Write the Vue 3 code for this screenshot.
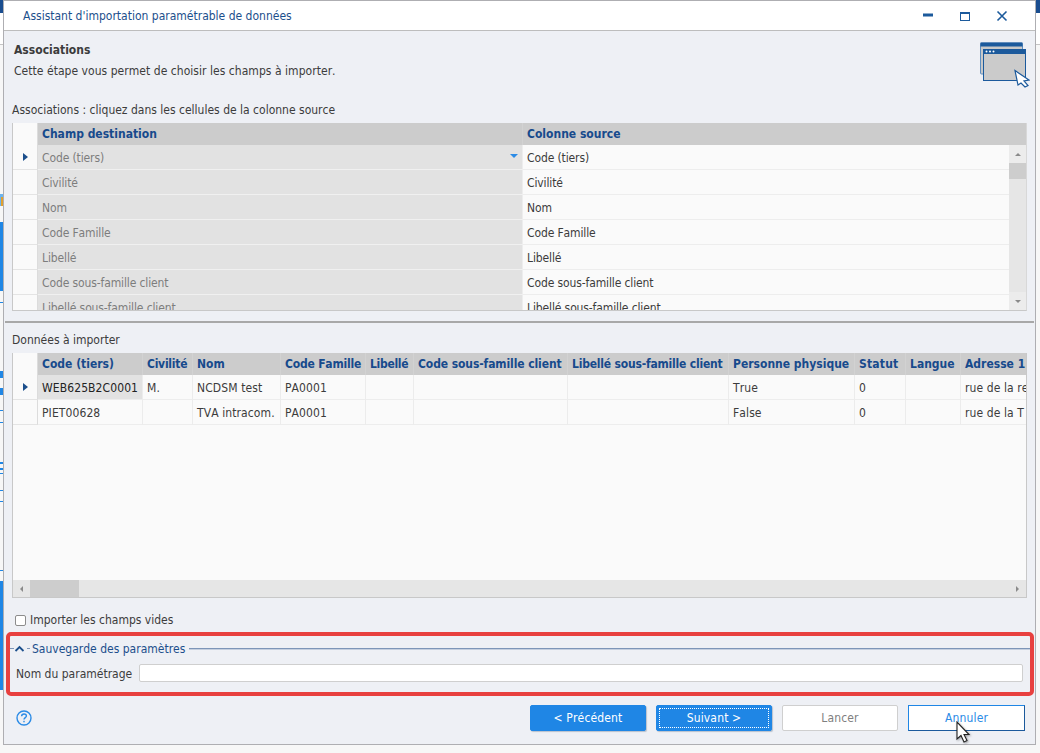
<script setup>
const mapRows = [
  "Code (tiers)",
  "Civilité",
  "Nom",
  "Code Famille",
  "Libellé",
  "Code sous-famille client",
  "Libellé sous-famille client",
];

const dataCols = [
  { label: "Code (tiers)", width: 105, spacing: 0 },
  { label: "Civilité", width: 50, spacing: -0.25 },
  { label: "Nom", width: 88, spacing: 0 },
  { label: "Code Famille", width: 85, spacing: -0.2 },
  { label: "Libellé", width: 48, spacing: -0.3 },
  { label: "Code sous-famille client", width: 154, spacing: -0.1 },
  { label: "Libellé sous-famille client", width: 161, spacing: -0.2 },
  { label: "Personne physique", width: 126, spacing: 0 },
  { label: "Statut", width: 51, spacing: 0.2 },
  { label: "Langue", width: 55, spacing: 0 },
  { label: "Adresse 1", width: 67, spacing: 0 },
];

const dataRows = [
  ["WEB625B2C0001", "M.", "NCDSM test", "PA0001", "", "", "", "True", "0", "", "rue de la re"],
  ["PIET00628", "", "TVA intracom.", "PA0001", "", "", "", "False", "0", "", "rue de la T"],
];

// bits of the application behind the dialog, visible left of it
const behind = [
  { top: 194, height: 12, left: 0, color: "#6cb4ee" },
  { top: 197, height: 9, left: 1, color: "#e0a030" },
  { top: 222, height: 69, left: 0, color: "#1f86e5" },
  { top: 302, height: 1, left: 0, color: "#1f86e5" },
  { top: 371, height: 7, left: 0, color: "#1f86e5" },
  { top: 388, height: 7, left: 0, color: "#1f86e5" },
  { top: 410, height: 1, left: 0, color: "#1f86e5" },
  { top: 422, height: 1, left: 0, color: "#1f86e5" },
  { top: 462, height: 2, left: 0, color: "#1f86e5" },
  { top: 468, height: 2, left: 0, color: "#1f86e5" },
  { top: 473, height: 1, left: 0, color: "#1f86e5" },
  { top: 490, height: 1, left: 0, color: "#1f86e5" },
  { top: 501, height: 1, left: 0, color: "#1f86e5" },
  { top: 570, height: 1, left: 0, color: "#1f86e5" },
  { top: 581, height: 109, left: 0, color: "#1f86e5" },
];
</script>

<template>
  <div class="desktop">
    <div class="behind-top"></div>
    <div class="behind-top right"></div>
    <div
      v-for="b in behind"
      :key="b.top"
      class="behind-bit"
      :style="{ top: b.top + 'px', height: b.height + 'px', left: b.left + 'px', background: b.color }"
    ></div>

    <div class="window">
      <div class="titlebar">
        <span class="title">Assistant d'importation paramétrable de données</span>
        <div class="win-btns">
          <svg width="12" height="12" viewBox="0 0 12 12"><rect x="1" y="3.500" width="10" height="3" fill="#1c5a9c" /></svg>
          <svg width="12" height="12" viewBox="0 0 12 12"><rect x="1.500" y="2.500" width="9" height="8" fill="none" stroke="#1c5a9c" /><rect x="1" y="2" width="10" height="2" fill="#1c5a9c" /></svg>
          <svg width="12" height="12" viewBox="0 0 12 12"><path d="M1.500 1.500 10.500 10.500M10.500 1.500 1.500 10.500" stroke="#1c5a9c" stroke-width="1.600" fill="none" /></svg>
        </div>
      </div>

      <div class="body">
        <div class="step-head">
          <div>
            <div class="step-title">Associations</div>
            <div class="step-sub">Cette étape vous permet de choisir les champs à importer.</div>
          </div>
          <svg class="step-icon" width="50" height="46" viewBox="0 0 50 46">
            <rect x="0.500" y="1" width="42" height="31" rx="1" fill="#c9c9c9" stroke="#5f8fc0" />
            <rect x="0.500" y="0.500" width="42" height="4" fill="#1c5a9c" />
            <rect x="3.500" y="7.500" width="42" height="31" fill="#cbcbcb" stroke="#1c5a9c" />
            <rect x="3" y="7" width="43" height="5" fill="#1c5a9c" />
            <circle cx="6.500" cy="9.500" r="1" fill="#fff" />
            <circle cx="10" cy="9.500" r="1" fill="#fff" />
            <circle cx="13.500" cy="9.500" r="1" fill="#fff" />
            <path d="M35 28.500 L49 38 L44 39 L48 43.500 L45 45 L41 41 L38 43 Z" fill="#fff" stroke="#1c5a9c" stroke-width="1.200" />
          </svg>
        </div>

        <div class="grid-label assoc-label">Associations : cliquez dans les cellules de la colonne source</div>
        <div class="map-grid">
          <div class="map-main">
            <div class="row head-row">
              <div class="ind"></div>
              <div class="cell map-col">Champ destination</div>
              <div class="cell map-col">Colonne source</div>
            </div>
            <div v-for="(name, i) in mapRows" :key="name" class="row map-row">
              <div class="ind"><span v-if="i === 0" class="arrow"></span></div>
              <div class="cell map-col dest">
                {{ name }}
                <span v-if="i === 0" class="drop"></span>
              </div>
              <div class="cell map-col src">{{ name }}</div>
            </div>
          </div>
          <div class="vscroll">
            <div class="vscroll-head"></div>
            <div class="sb-btn"><span class="tri-up"></span></div>
            <div class="sb-thumb"></div>
            <div class="sb-track"></div>
            <div class="sb-btn"><span class="tri-down"></span></div>
          </div>
        </div>

        <div class="splitter"></div>

        <div class="grid-label data-label">Données à importer</div>
        <div class="data-grid">
          <div class="data-main">
            <div class="row head-row">
              <div class="ind"></div>
              <div
                v-for="c in dataCols"
                :key="c.label"
                class="cell"
                :style="{ width: c.width + 'px', letterSpacing: c.spacing + 'px' }"
              >{{ c.label }}</div>
            </div>
            <div v-for="(r, i) in dataRows" :key="i" class="row data-row">
              <div class="ind"><span v-if="i === 0" class="arrow"></span></div>
              <div
                v-for="(v, j) in r"
                :key="j"
                class="cell"
                :class="{ current: i === 0 && j === 0 }"
                :style="{ width: dataCols[j].width + 'px' }"
              >{{ v }}</div>
            </div>
          </div>
          <div class="hscroll">
            <div class="sb-btn-h"><span class="tri-left"></span></div>
            <div class="sb-thumb-h"></div>
            <div class="sb-track-h"></div>
            <div class="sb-btn-h"><span class="tri-right"></span></div>
          </div>
        </div>

        <label class="check-line">
          <span class="check"></span>
          Importer les champs vides
        </label>

        <div class="save-box">
          <div class="save-head">
            <span class="dash"></span>
            <svg width="11" height="7" viewBox="0 0 11 7"><path d="M1.500 6 5.500 2 9.500 6" fill="none" stroke="#1c4f8c" stroke-width="1.800" /></svg>
            <span class="dash second"></span>
            <span class="save-title">Sauvegarde des paramètres</span>
            <span class="save-line"></span>
          </div>
          <div class="save-field">
            <span class="save-name">Nom du paramétrage</span>
            <div class="save-input"></div>
          </div>
        </div>

        <div class="footer">
          <svg width="16" height="16" viewBox="0 0 16 16">
            <circle cx="8" cy="8" r="7" fill="none" stroke="#2b8be6" stroke-width="1.400" />
            <path d="M5.600 6.200C5.700 4.800 6.700 4 8 4s2.400.8 2.400 2.100C10.400 7.700 8 7.700 8 9.600" fill="none" stroke="#2b8be6" stroke-width="1.400" />
            <rect x="7.300" y="10.800" width="1.400" height="1.500" fill="#2b8be6" />
          </svg>
          <div class="btns">
            <button class="btn primary">&lt; Précédent</button>
            <button class="btn primary focus"><span>Suivant &gt;</span></button>
            <button class="btn disabled">Lancer</button>
            <button class="btn hover">Annuler</button>
          </div>
        </div>
      </div>
    </div>

    <svg class="cursor" width="26" height="26" viewBox="0 0 26 26">
      <path d="M2 1V18L6 14.500 9 21 12 19.500 9 13.500H14Z" fill="#fff" stroke="#222" stroke-width="1.100" />
    </svg>
  </div>
</template>

<style>
html,
body {
  margin: 0;
  background: #f7f7f7;
}
</style>

<style scoped>
.desktop {
  position: relative;
  width: 1040px;
  height: 753px;
  overflow: hidden;
  background: #f7f7f7;
  font-family: "DejaVu Sans", sans-serif;
  font-stretch: condensed;
  font-kerning: none;
  font-size: 12px;
  color: #3c3c3c;
}

.behind-top {
  position: absolute;
  left: 0;
  top: 0;
  width: 3px;
  height: 44px;
  background: linear-gradient(#1a4d8f 13px, #fff 13px);
  border-bottom: 1px solid #c4c4c4;
}
.behind-top.right {
  left: auto;
  right: 0;
  width: 4px;
}
.behind-bit {
  position: absolute;
  width: 3px;
}

.window {
  position: absolute;
  left: 3px;
  top: 0;
  width: 1031px;
  height: 743px;
  display: flex;
  flex-direction: column;
  background: #eef0f5;
  border: 1px solid #aeaeb2;
}

.titlebar {
  height: 29px;
  flex: none;
  display: flex;
  align-items: center;
  justify-content: space-between;
  background: #fff;
  border-bottom: 1px solid #bdbdbd;
}
.title {
  margin-left: 19px;
  color: #1c4f8c;
}
.win-btns {
  display: flex;
  gap: 25px;
  margin-right: 27px;
}

.body {
  flex: 1;
  position: relative;
  display: flex;
  flex-direction: column;
  padding: 0 7px 0 8px;
}

.step-head {
  display: flex;
  justify-content: space-between;
  height: 62px;
  padding: 11px 0 0 2px;
  box-sizing: border-box;
}
.step-title {
  font-weight: 700;
  color: #3c3c3c;
  line-height: 17px;
}
.step-sub {
  margin-top: 4px;
  line-height: 16px;
  letter-spacing: 0.04px;
}
.step-icon {
  margin: 0 -2px 0 0;
}

.grid-label {
  line-height: 16px;
}
.assoc-label {
  margin-top: 9px;
  height: 21px;
}

.map-grid {
  display: flex;
  height: 188px;
  width: 1015px;
  overflow: hidden;
  background: #fafafa;
  border-bottom: 1px solid #c8c8c8;
  border-right: 1px solid #d8d8d8;
  border-left: 1px solid #c8c8c8;
  box-sizing: border-box;
  flex: none;
}
.map-main {
  flex: 1;
  overflow: hidden;
}
.row {
  display: flex;
}
.ind {
  width: 24px;
  flex: none;
  display: flex;
  align-items: center;
  justify-content: center;
  background: #fafafa;
  border-right: 1px solid #dcdcdc;
  border-bottom: 1px solid #e4e4e4;
}
.head-row {
  height: 22px;
  background: #cccccc;
}
.head-row .ind {
  border-bottom: none;
  height: 22px;
}
.head-row .cell {
  font-weight: 700;
  color: #174a8c;
  background: #cccccc;
  border-bottom: none;
  border-right: 1px solid #d2d2d2;
}
.cell {
  flex: none;
  height: 100%;
  box-sizing: border-box;
  padding-left: 4px;
  display: flex;
  align-items: center;
  white-space: nowrap;
  overflow: hidden;
  border-right: 1px solid #ededed;
  border-bottom: 1px solid #ededed;
}
.map-col {
  width: 485px;
}
.map-row {
  height: 25px;
  letter-spacing: -0.12px;
}
.map-row .ind,
.data-row .ind {
  height: 24px;
}
.map-row .cell,
.data-row .cell {
  padding-top: 1px;
}
.dest {
  position: relative;
  background: #e2e2e2;
  color: #7d7d7d;
  border-bottom-color: #f0f0f0;
}
.src {
  width: 487px;
  background: #fafafa;
}
.head-row .map-col + .map-col {
  width: 487px;
}
.arrow {
  width: 0;
  height: 0;
  border-left: 5px solid #1c4f8c;
  border-top: 4px solid transparent;
  border-bottom: 4px solid transparent;
}
.drop {
  position: absolute;
  right: 4px;
  top: 9px;
  width: 0;
  height: 0;
  border-top: 4px solid #2b8be6;
  border-left: 4px solid transparent;
  border-right: 4px solid transparent;
}

.vscroll {
  width: 17px;
  flex: none;
  display: flex;
  flex-direction: column;
  background: #e6e6e6;
}
.vscroll-head {
  height: 22px;
  background: #cccccc;
  flex: none;
}
.sb-btn {
  height: 18px;
  flex: none;
  display: flex;
  align-items: center;
  justify-content: center;
  background: #ececec;
}
.sb-thumb {
  height: 16px;
  flex: none;
  background: #cdcdcd;
}
.sb-track {
  flex: 1;
  background: #e6e6e6;
}
.tri-up,
.tri-down {
  width: 0;
  height: 0;
  border-left: 3px solid transparent;
  border-right: 3px solid transparent;
}
.tri-up {
  border-bottom: 3px solid #8a8a8a;
}
.tri-down {
  border-top: 3px solid #8a8a8a;
}

.splitter {
  height: 2px;
  margin: 10px -6px 0 -7px;
  background: #a8a8a8;
  flex: none;
}
.data-label {
  margin-top: 9px;
  height: 21px;
}

.data-grid {
  width: 1015px;
  height: 245px;
  flex: none;
  display: flex;
  flex-direction: column;
  background: #fafafa;
  border-left: 1px solid #c8c8c8;
  border-right: 1px solid #c8c8c8;
  border-bottom: 1px solid #c8c8c8;
  box-sizing: border-box;
}
.data-main {
  flex: 1;
  overflow: hidden;
}
.data-row {
  height: 25px;
  letter-spacing: 0.1px;
}
.data-row .cell {
  border-right-color: #ececec;
}
.current {
  background: #e2e2e2;
  color: #222;
}
.hscroll {
  height: 17px;
  flex: none;
  display: flex;
  background: #e6e6e6;
}
.sb-btn-h {
  width: 17px;
  flex: none;
  display: flex;
  align-items: center;
  justify-content: center;
}
.sb-thumb-h {
  width: 49px;
  flex: none;
  background: #cdcdcd;
}
.sb-track-h {
  flex: 1;
}
.tri-left,
.tri-right {
  width: 0;
  height: 0;
  border-top: 3px solid transparent;
  border-bottom: 3px solid transparent;
}
.tri-left {
  border-right: 3px solid #8a8a8a;
}
.tri-right {
  border-left: 3px solid #8a8a8a;
}

.check-line {
  display: flex;
  align-items: center;
  gap: 4px;
  height: 16px;
  margin: 14px 0 0 3px;
}
.check {
  width: 9px;
  height: 9px;
  border: 1px solid #8c8c8c;
  border-radius: 2px;
  background: #fff;
}

.save-box {
  height: 64px;
  flex: none;
  margin: 4px -6px 0 -6px;
  box-sizing: border-box;
  border: 4px solid #e8403f;
  border-radius: 5px;
  padding: 0 7px 0 5px;
}
.save-head {
  display: flex;
  align-items: center;
  height: 15px;
  margin: 5px -7px 0 -5px;
}
.dash {
  width: 4px;
  height: 1px;
  background: #7d95b8;
  flex: none;
}
.dash.second {
  width: 3px;
  margin-left: 2px;
}
.save-title {
  margin-left: 2px;
  color: #1c4f8c;
}
.save-line {
  flex: 1;
  height: 1px;
  margin-left: 4px;
  background: #7d95b8;
  box-shadow: 0 1px #c5cfdf;
}
.save-field {
  display: flex;
  align-items: center;
  gap: 7px;
  margin-top: 8px;
  padding-left: 1px;
}
.save-name {
  padding-top: 2px;
}
.save-input {
  flex: 1;
  height: 18px;
  background: #fff;
  border: 1px solid #cfcfcf;
  border-radius: 2px;
  box-sizing: border-box;
}

.footer {
  display: flex;
  justify-content: space-between;
  align-items: center;
  padding: 0 3px 0 4px;
  margin-top: 9px;
}
.btns {
  display: flex;
  gap: 10px;
}
.btn {
  width: 116px;
  height: 26px;
  padding: 0;
  font: inherit;
  font-stretch: condensed;
  font-kerning: none;
  letter-spacing: 0.15px;
  border-radius: 2px;
  box-sizing: border-box;
}
.primary {
  border: 1px solid #1f86e5;
  background: #1f86e5;
  color: #fff;
  box-shadow: 1px 1px 1px #b8c0cc;
}
.focus {
  padding: 2px;
}
.focus span {
  display: flex;
  align-items: center;
  justify-content: center;
  height: 100%;
  border: 1px dotted #fff;
  box-sizing: border-box;
}
.disabled {
  border: 1px solid #cfcfcf;
  background: #fff;
  color: #7f7f7f;
}
.hover {
  width: 117px;
  border: 1px solid #1f86e5;
  border-right-color: #1c5a9c;
  border-bottom-color: #1c5a9c;
  border-radius: 0;
  background: #fff;
  color: #2b8be6;
}

.cursor {
  position: absolute;
  left: 955px;
  top: 721px;
  filter: drop-shadow(1px 1px 1px rgba(0, 0, 0, 0.35));
}
</style>
